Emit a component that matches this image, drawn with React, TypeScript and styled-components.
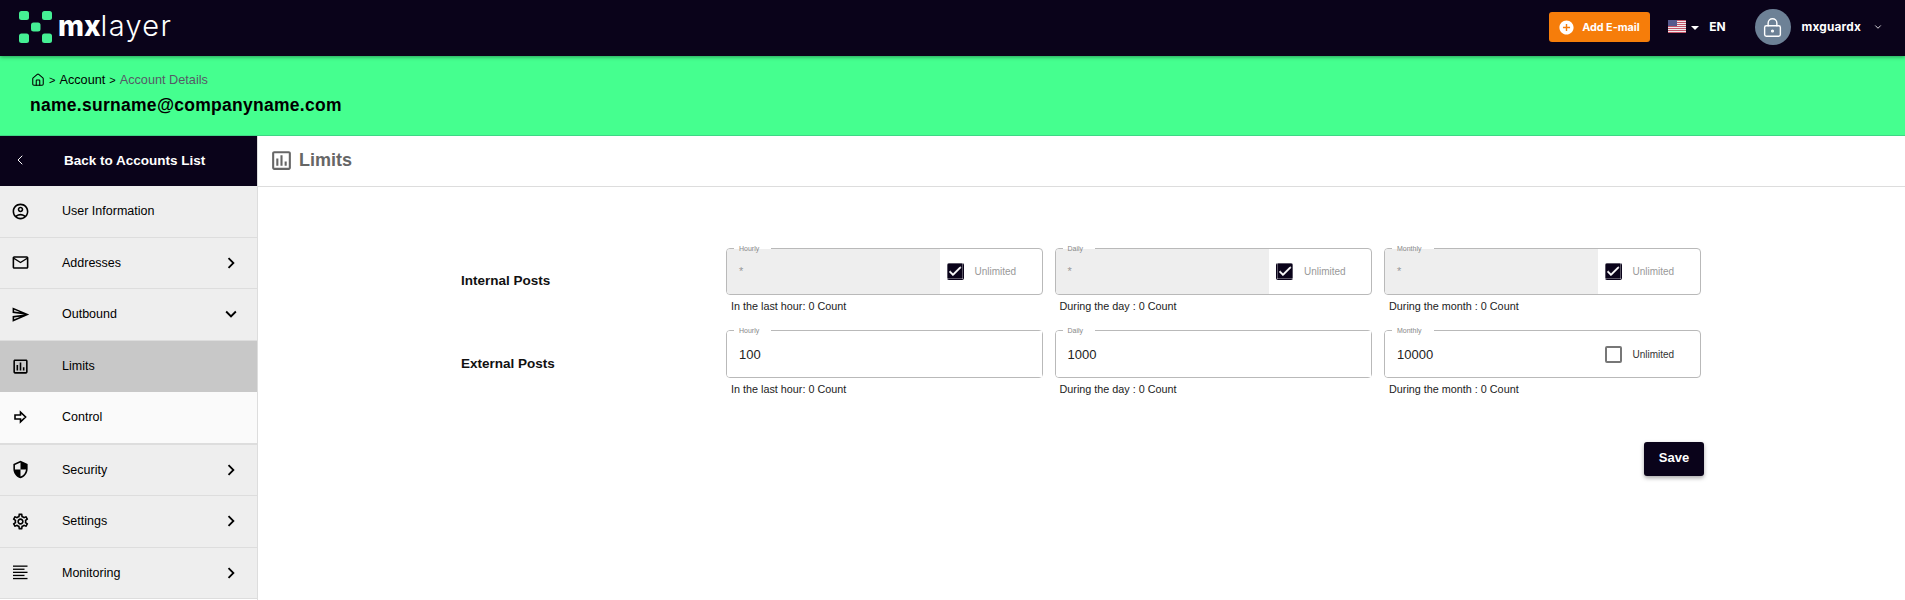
import React from "react";
import styled, { createGlobalStyle } from "styled-components";
import {
  MdAddCircle,
  MdCheck,
  MdChevronRight,
  MdKeyboardArrowDown,
  MdOutlineAccountCircle,
  MdOutlineAssessment,
  MdOutlineEmail,
  MdOutlineSend,
  MdOutlineSettings,
  MdSecurity,
} from "react-icons/md";
import { ChevronDown, ChevronLeft, House, LockKeyhole } from "lucide-react";

const DARK = "#0a031a";
const GREEN = "#45ff8f";

const Global = createGlobalStyle`
  html, body { margin: 0; padding: 0; height: 600px; overflow: hidden; background: #fff; }
  body { font-family: "Liberation Sans", Arial, sans-serif; color: #000; }
  * { box-sizing: border-box; }
`;

const Page = styled.div`
  display: flex;
  flex-direction: column;
  width: 1905px;
  height: 600px;
  overflow: hidden;
`;

const TopBar = styled.header`
  position: relative;
  z-index: 2;
  display: flex;
  align-items: center;
  justify-content: space-between;
  flex: 0 0 56px;
  padding: 0 22px 2px 19px;
  background: ${DARK};
  box-shadow: 0 1px 4px rgba(0, 0, 0, 0.4);
`;

const Logo = styled.div`
  display: flex;
  align-items: center;
  gap: 6px;
  color: #fff;
  font-family: Inter, sans-serif;
  font-size: 28px;
  line-height: 32px;
`;

const LogoMx = styled.span`
  font-weight: 800;
`;

const LogoLayer = styled.span`
  font-size: 29px;
  font-weight: 300;
  letter-spacing: 1.3px;
`;

const LogoWord = styled.div`
  display: flex;
  align-items: center;
  margin-top: -2px;
`;

const TopRight = styled.div`
  display: flex;
  align-items: center;
`;

const AddButton = styled.button`
  display: flex;
  align-items: center;
  gap: 7px;
  width: 101px;
  height: 30px;
  padding: 0 0 0 9px;
  border: 0;
  border-radius: 3px;
  background: #f67d0a;
  color: #fff;
  font-family: Inter, sans-serif;
  font-size: 10.8px;
  font-weight: 700;
  white-space: nowrap;
`;

const Lang = styled.div`
  display: flex;
  align-items: center;
  margin: 0 0 2px 18px;
  color: #fff;
  font-family: Inter, sans-serif;
  font-size: 12px;
  font-weight: 700;
`;

const Caret = styled.span`
  width: 0;
  height: 0;
  margin: 3px 10px 0 5px;
  border-left: 4px solid transparent;
  border-right: 4px solid transparent;
  border-top: 4px solid #fff;
`;

const Avatar = styled.div`
  display: flex;
  align-items: center;
  justify-content: center;
  width: 36px;
  height: 36px;
  margin-left: 29px;
  border-radius: 50%;
  background: #6d8196;
  color: #fff;
`;

const UserName = styled.span`
  margin: 0 12px 0 11px;
  color: #fff;
  font-family: Inter, sans-serif;
  font-size: 11.8px;
  font-weight: 700;
  letter-spacing: 0.2px;
`;

const Banner = styled.section`
  flex: 0 0 80px;
  padding: 14px 30px 0;
  background: ${GREEN};
  border-bottom: 1px solid #3fd685;
`;

const Crumbs = styled.nav`
  display: flex;
  align-items: center;
  height: 20px;
  padding-left: 1px;
  font-size: 12.7px;
`;

const CrumbSep = styled.span`
  margin: 0 4px;
  font-size: 11px;
`;

const CrumbCurrent = styled.span`
  color: #555a66;
`;

const Email = styled.h1`
  margin: 4px 0 0;
  font-size: 17.5px;
  line-height: 22px;
  font-weight: 700;
  letter-spacing: 0.28px;
`;

const Body = styled.div`
  display: flex;
  flex: 1;
  min-height: 0;
`;

const Sidebar = styled.aside`
  flex: 0 0 258px;
  border-right: 1px solid #ddd;
`;

const BackBar = styled.div`
  display: flex;
  align-items: center;
  height: 50px;
  padding: 0 0 2px 12px;
  background: ${DARK};
  color: #fff;
  font-size: 13.5px;
  font-weight: 700;
`;

const BackLabel = styled.span`
  margin-left: 36px;
`;

const Row = styled.div<{ $bg?: string; $h?: number; $line?: number }>`
  display: flex;
  align-items: center;
  height: ${(p) => p.$h ?? 51.5}px;
  padding: 0 15px 0 13px;
  background: ${(p) => p.$bg ?? "#eee"};
  border-bottom: ${(p) => p.$line ?? 1}px solid #ddd;
  font-size: 12.5px;
`;

const RowIcon = styled.span`
  display: flex;
  align-items: center;
  justify-content: center;
  flex: 0 0 15px;
  width: 15px;
  height: 20px;
  svg {
    flex-shrink: 0;
  }
`;

const RowLabel = styled.span`
  flex: 1;
  margin-left: 34px;
`;

const Main = styled.main`
  flex: 1;
  min-width: 0;
`;

const TitleBar = styled.div`
  display: flex;
  align-items: center;
  gap: 5px;
  height: 51px;
  padding: 0 0 2px 11px;
  border-bottom: 1px solid #ddd;
  color: #666;
  font-size: 18px;
  font-weight: 700;
`;

const Form = styled.form`
  width: 1243px;
  margin: 60.6px 0 0 203px;
`;

const Grid = styled.div`
  display: grid;
  grid-template-columns: 253px 316.5px 317.5px 316.5px;
  column-gap: 12px;
  row-gap: 17.5px;
  align-items: center;
`;

const RowTitle = styled.div`
  font-size: 13.5px;
  font-weight: 700;
  color: #111;
`;

const FieldBox = styled.div`
  position: relative;
  display: flex;
  height: 47.5px;
  border: 1px solid #b9b9b9;
  border-radius: 4px;
  background: #fff;
`;

const Notch = styled.span`
  position: absolute;
  top: -1px;
  left: 7px;
  height: 1px;
  padding: 0 12px 0 5px;
  background: #fff;
  color: #888;
  font-size: 7px;
  line-height: 1px;
`;

const Value = styled.div<{ $locked?: boolean }>`
  display: flex;
  flex: 1;
  padding: ${(p) => (p.$locked ? "15px" : "1px")} 12px 0;
  align-items: ${(p) => (p.$locked ? "flex-start" : "center")};
  border-radius: 3px 0 0 3px;
  background: ${(p) => (p.$locked ? "#eee" : "#fff")};
  color: ${(p) => (p.$locked ? "#999" : "#222")};
  font-size: ${(p) => (p.$locked ? "11px" : "13px")};
  line-height: 14px;
`;

const Unlimited = styled.label<{ $on: boolean }>`
  display: flex;
  align-items: center;
  flex: 0 0 102px;
  padding-left: 7px;
  color: ${(p) => (p.$on ? "#999" : "#333")};
  font-size: 10px;
`;

const Tick = styled.span<{ $on: boolean }>`
  display: flex;
  align-items: center;
  justify-content: center;
  width: 17px;
  height: 17px;
  margin-right: 11px;
  border-radius: 2px;
  border: ${(p) => (p.$on ? "0" : "2px solid #777")};
  background: ${(p) => (p.$on ? DARK : "#fff")};
  color: #fff;
`;

const Helper = styled.div`
  margin-top: 3.8px;
  padding-left: 5px;
  color: #222;
  font-size: 10.8px;
  line-height: 14px;
`;

const Actions = styled.div`
  display: flex;
  justify-content: flex-end;
  margin-top: 46.3px;
`;

const SaveButton = styled.button`
  width: 60px;
  height: 34px;
  padding: 0 0 2px;
  border: 0;
  border-radius: 3px;
  background: ${DARK};
  color: #fff;
  font-family: "Liberation Sans", Arial, sans-serif;
  font-size: 13px;
  font-weight: 700;
  box-shadow: 0 2px 4px rgba(0, 0, 0, 0.35);
`;

const LogoMark = () => (
  <svg width="33" height="32" viewBox="0 0 33 32" fill="#45ef94">
    <rect x="0" y="0" width="10" height="9" rx="2.5" />
    <rect x="23" y="0" width="10" height="9" rx="2.5" />
    <rect x="12" y="11.5" width="9.5" height="9" rx="2.5" />
    <rect x="0" y="22.5" width="10" height="9.5" rx="2.5" />
    <rect x="23" y="22.5" width="10" height="9.5" rx="2.5" />
  </svg>
);

const UsFlag = () => (
  <svg width="18" height="13" viewBox="0 0 18 13">
    <rect width="18" height="13" fill="#eee" />
    {[0, 2, 4, 6, 8, 10, 12].map((y) => (
      <rect key={y} y={y} width="18" height="1" fill="#c4566a" />
    ))}
    <rect width="9" height="6" fill="#565a8e" />
  </svg>
);

const ControlIcon = () => (
  <svg width="15" height="14" viewBox="0 0 15 14" fill="none" stroke="#000" strokeWidth="1.6" strokeLinejoin="miter">
    <path d="M2 5h5.5V2.2L12.6 7l-5.1 4.8V9H2z" />
  </svg>
);

const LinesIcon = () => (
  <svg width="15" height="15" viewBox="0 0 15 15" fill="#000">
    <rect y="0.5" width="14.5" height="1.3" />
    <rect y="3.6" width="11.5" height="1.3" />
    <rect y="6.7" width="14.5" height="1.3" />
    <rect y="9.8" width="11.5" height="1.3" />
    <rect y="12.9" width="14.5" height="1.3" />
  </svg>
);

type NavEntry = {
  label: string;
  icon: React.ReactNode;
  arrow?: "right" | "down";
  bg?: string;
  h?: number;
  line?: number;
};

const NAV: NavEntry[] = [
  { label: "User Information", icon: <MdOutlineAccountCircle size={19} /> },
  { label: "Addresses", icon: <MdOutlineEmail size={19} />, arrow: "right" },
  { label: "Outbound", icon: <MdOutlineSend size={19} />, arrow: "down" },
  { label: "Limits", icon: <MdOutlineAssessment size={19} />, bg: "#c8c8c8", line: 0 },
  { label: "Control", icon: <ControlIcon />, bg: "#fafafa", h: 52.5, line: 2 },
  { label: "Security", icon: <MdSecurity size={19} />, arrow: "right" },
  { label: "Settings", icon: <MdOutlineSettings size={19} />, arrow: "right" },
  { label: "Monitoring", icon: <LinesIcon />, arrow: "right" },
];

type FieldData = {
  label: string;
  value: string;
  helper: string;
  unlimited?: boolean;
  locked?: boolean;
};

const Field = ({ label, value, helper, unlimited, locked }: FieldData) => (
  <div>
    <FieldBox>
      <Notch>{label}</Notch>
      <Value $locked={locked}>{value}</Value>
      {unlimited && (
        <Unlimited $on={!!locked}>
          <Tick $on={!!locked}>
            {locked && <MdCheck size={16} stroke="currentColor" strokeWidth={1} />}
          </Tick>
          Unlimited
        </Unlimited>
      )}
    </FieldBox>
    <Helper>{helper}</Helper>
  </div>
);

const HOUR = "In the last hour: 0 Count";
const DAY = "During the day : 0 Count";
const MONTH = "During the month : 0 Count";

export default function App() {
  return (
    <Page>
      <Global />
      <TopBar>
        <Logo>
          <LogoMark />
          <LogoWord>
            <LogoMx>mx</LogoMx>
            <LogoLayer>layer</LogoLayer>
          </LogoWord>
        </Logo>
        <TopRight>
          <AddButton type="button">
            <MdAddCircle size={17} />
            Add E-mail
          </AddButton>
          <Lang>
            <UsFlag />
            <Caret />
            EN
          </Lang>
          <Avatar>
            <LockKeyhole size={21} strokeWidth={1.6} />
          </Avatar>
          <UserName>mxguardx</UserName>
          <ChevronDown size={10} color="#fff" />
        </TopRight>
      </TopBar>
      <Banner>
        <Crumbs>
          <House size={14} strokeWidth={1.8} />
          <CrumbSep>&gt;</CrumbSep>
          Account
          <CrumbSep>&gt;</CrumbSep>
          <CrumbCurrent>Account Details</CrumbCurrent>
        </Crumbs>
        <Email>name.surname@companyname.com</Email>
      </Banner>
      <Body>
        <Sidebar>
          <BackBar>
            <ChevronLeft size={16} strokeWidth={1.5} />
            <BackLabel>Back to Accounts List</BackLabel>
          </BackBar>
          {NAV.map((n) => (
            <Row key={n.label} $bg={n.bg} $h={n.h} $line={n.line}>
              <RowIcon>{n.icon}</RowIcon>
              <RowLabel>{n.label}</RowLabel>
              {n.arrow === "right" && <MdChevronRight size={22} />}
              {n.arrow === "down" && <MdKeyboardArrowDown size={22} />}
            </Row>
          ))}
        </Sidebar>
        <Main>
          <TitleBar>
            <MdOutlineAssessment size={25} />
            Limits
          </TitleBar>
          <Form>
            <Grid>
              <RowTitle>Internal Posts</RowTitle>
              <Field label="Hourly" value="*" helper={HOUR} unlimited locked />
              <Field label="Daily" value="*" helper={DAY} unlimited locked />
              <Field label="Monthly" value="*" helper={MONTH} unlimited locked />
              <RowTitle>External Posts</RowTitle>
              <Field label="Hourly" value="100" helper={HOUR} />
              <Field label="Daily" value="1000" helper={DAY} />
              <Field label="Monthly" value="10000" helper={MONTH} unlimited />
            </Grid>
            <Actions>
              <SaveButton type="button">Save</SaveButton>
            </Actions>
          </Form>
        </Main>
      </Body>
    </Page>
  );
}
